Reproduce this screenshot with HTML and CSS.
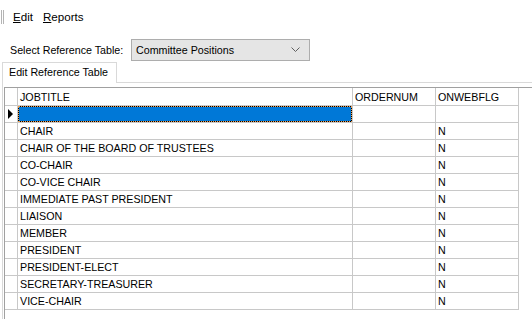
FILE: index.html
```html
<!DOCTYPE html>
<html lang="en">

<head>
    <meta charset="UTF-8">
    <meta name="viewport" content="width=device-width, initial-scale=1.0">
    <title>Reference Tables</title>
    <link rel="stylesheet" href="styles.css">
</head>

<body>
    <div class="menubar">
        <span class="grip"></span>
        <span class="menuItem"><u>E</u>dit</span>
        <span class="menuItem"><u>R</u>eports</span>
    </div>

    <div class="pickRow">
        <label class="pickLabel">Select Reference Table:</label>
        <div class="combo">
            <span>Committee Positions</span>
            <svg class="chevron" width="9" height="6" viewBox="0 0 9 6">
                <path d="M0.5 0.5 L4.5 4.5 L8.5 0.5" fill="none" stroke="#606060" stroke-width="1"/>
            </svg>
        </div>
    </div>

    <div class="tabs">
        <div class="tabStrip">
            <div class="tab">Edit Reference Table</div>
        </div>
        <div class="tabPage">
            <div class="grid">
                <table>
                    <thead>
                        <tr>
                            <th class="rowHead"></th>
                            <th class="colTitle">JOBTITLE</th>
                            <th class="colNum">ORDERNUM</th>
                            <th class="colFlag">ONWEBFLG</th>
                        </tr>
                    </thead>
                    <tbody>
                        <tr>
                            <td class="rowHead"><span class="arrow"></span></td>
                            <td class="selected"></td>
                            <td></td>
                            <td></td>
                        </tr>
                        <tr><td class="rowHead"></td><td>CHAIR</td><td></td><td>N</td></tr>
                        <tr><td class="rowHead"></td><td>CHAIR OF THE BOARD OF TRUSTEES</td><td></td><td>N</td></tr>
                        <tr><td class="rowHead"></td><td>CO-CHAIR</td><td></td><td>N</td></tr>
                        <tr><td class="rowHead"></td><td>CO-VICE CHAIR</td><td></td><td>N</td></tr>
                        <tr><td class="rowHead"></td><td>IMMEDIATE PAST PRESIDENT</td><td></td><td>N</td></tr>
                        <tr><td class="rowHead"></td><td>LIAISON</td><td></td><td>N</td></tr>
                        <tr><td class="rowHead"></td><td>MEMBER</td><td></td><td>N</td></tr>
                        <tr><td class="rowHead"></td><td>PRESIDENT</td><td></td><td>N</td></tr>
                        <tr><td class="rowHead"></td><td>PRESIDENT-ELECT</td><td></td><td>N</td></tr>
                        <tr><td class="rowHead"></td><td>SECRETARY-TREASURER</td><td></td><td>N</td></tr>
                        <tr><td class="rowHead"></td><td>VICE-CHAIR</td><td></td><td>N</td></tr>
                    </tbody>
                </table>
            </div>
        </div>
    </div>
</body>

</html>
```

FILE: styles.css
```css
body, html {
    margin: 0;
    height: 100%;
    background: #ffffff;
    color: #000000;
    font-family: "Liberation Sans", Arial, sans-serif;
    font-size: 10.7px;
    overflow: hidden;
}

/* menu strip */
.menubar {
    display: flex;
    align-items: center;
    height: 25px;
    padding-top: 4px;
    font-size: 11.6px;
}

.grip {
    width: 1px;
    height: 14px;
    margin-left: 1px;
    border-left: 1px solid #b4b4b4;
    border-right: 1px solid #b4b4b4;
}

.menuItem {
    margin-left: 8px;
    padding: 0 1px;
}

.menuItem + .menuItem {
    margin-left: 8px;
}

/* table picker */
.pickRow {
    display: flex;
    align-items: center;
    height: 22px;
    margin-top: 10px;
    padding-left: 10px;
}

.pickLabel {
    width: 121px;
}

.combo {
    display: flex;
    align-items: center;
    justify-content: space-between;
    box-sizing: border-box;
    width: 179px;
    height: 22px;
    padding: 0 9px 0 4px;
    background: #e5e5e5;
    border: 1px solid #adadad;
}

.chevron {
    display: block;
}

/* tab control */
.tabs {
    margin-top: 1px;
    margin-left: 2px;
}

.tabStrip {
    display: flex;
    height: 20px;
}

.tab {
    box-sizing: border-box;
    width: 115px;
    height: 21px;
    padding: 3px 0 0 6px;
    background: #ffffff;
    border: 1px solid #d9d9d9;
    border-bottom: none;
    position: relative;
    z-index: 1;
}

.tabPage {
    box-sizing: border-box;
    height: 237px;
    border-top: 1px solid #d9d9d9;
    border-left: 1px solid #d9d9d9;
    padding: 4px 0 0 1px;
}

/* data grid */
.grid {
    box-sizing: border-box;
    height: 100%;
    border-top: 1px solid #a0a0a0;
    border-left: 1px solid #a0a0a0;
    background: #ffffff;
}

.grid table {
    border-collapse: separate;
    border-spacing: 0;
    table-layout: fixed;
}

.grid th,
.grid td {
    box-sizing: border-box;
    height: 17px;
    padding: 0 0 0 2px;
    border-right: 1px solid #c8c8c8;
    border-bottom: 1px solid #c8c8c8;
    font-weight: normal;
    text-align: left;
    white-space: nowrap;
    line-height: 15px;
}

.grid th {
    height: 18px;
    padding-top: 1px;
}

.grid .rowHead {
    width: 13px;
    padding: 0;
    position: relative;
}

.colTitle {
    width: 335px;
}

.colNum {
    width: 83px;
}

.colFlag {
    width: 83px;
}

.arrow {
    position: absolute;
    left: 3px;
    top: 3px;
    width: 0;
    height: 0;
    border-top: 5px solid transparent;
    border-bottom: 5px solid transparent;
    border-left: 5px solid #000000;
}

/* current cell with focus rectangle */
.grid td.selected {
    position: relative;
    background: #000000;
}

.selected::before {
    content: "";
    position: absolute;
    inset: 1px;
    background: #0078d7;
}

.selected::after {
    content: "";
    position: absolute;
    inset: 0;
    border: 1px dotted #f0a050;
}
```
